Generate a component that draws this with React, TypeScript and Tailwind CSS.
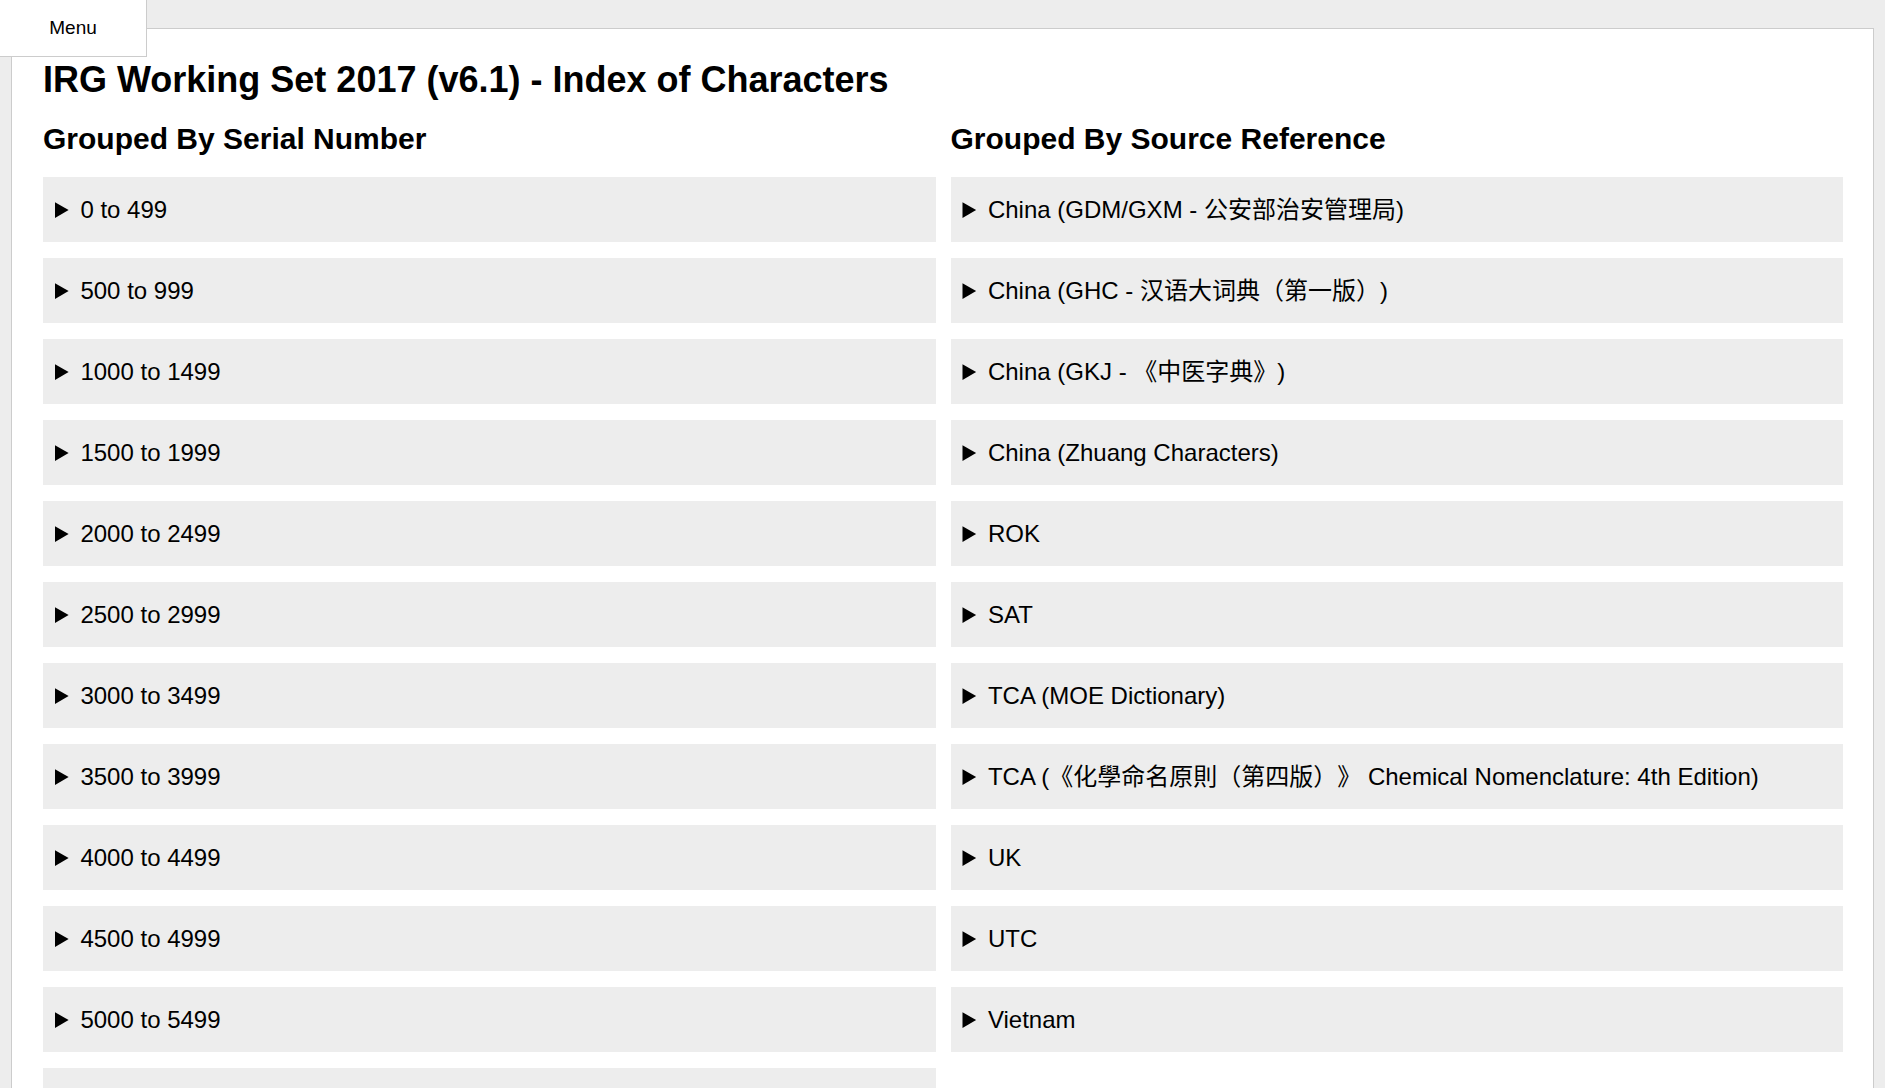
const serialGroups = [
  '0 to 499',
  '500 to 999',
  '1000 to 1499',
  '1500 to 1999',
  '2000 to 2499',
  '2500 to 2999',
  '3000 to 3499',
  '3500 to 3999',
  '4000 to 4499',
  '4500 to 4999',
  '5000 to 5499',
  '5500 to 5999',
];

const sourceGroups = [
  'China (GDM/GXM - 公安部治安管理局)',
  'China (GHC - 汉语大词典（第一版）)',
  'China (GKJ - 《中医字典》)',
  'China (Zhuang Characters)',
  'ROK',
  'SAT',
  'TCA (MOE Dictionary)',
  'TCA (《化學命名原則（第四版）》 Chemical Nomenclature: 4th Edition)',
  'UK',
  'UTC',
  'Vietnam',
];

function Group({ label }: { label: string }) {
  return (
    <details className="mb-[16px] bg-[#ededed]">
      <summary className="box-border h-[65px] cursor-pointer overflow-hidden pl-[12px] py-[19px] text-[24px] leading-[27px] text-black [text-spacing-trim:space-all]">
        {label}
      </summary>
    </details>
  );
}

function Column({ title, items }: { title: string; items: string[] }) {
  return (
    <div className="min-w-0">
      <h2 className="mt-[22px] mb-[21px] text-[30px] leading-[34px] font-bold text-black">{title}</h2>
      <div>
        {items.map((item, index) => (
          <Group key={index} label={item} />
        ))}
      </div>
    </div>
  );
}

export default function App() {
  return (
    <div className="min-h-screen bg-[#ededed] pt-[28px] font-['Liberation_Sans','Noto_Sans_CJK_SC',sans-serif]">
      {/* Floating menu tab */}
      <div className="fixed top-0 left-0 z-10 flex h-[57px] w-[147px] items-center justify-center border-r border-b border-[#cccccc] bg-white text-[19px] text-black">
        Menu
      </div>

      <div className="mx-[11px] min-h-[1100px] border border-[#cccccc] bg-white pt-[30px] pl-[31px] pr-[30px]">
        <h1 className="text-[36px] leading-[41px] font-bold text-black">
          IRG Working Set 2017 (v6.1) - Index of Characters
        </h1>
        <div className="grid grid-cols-2 gap-x-[15px]">
          <Column title="Grouped By Serial Number" items={serialGroups} />
          <Column title="Grouped By Source Reference" items={sourceGroups} />
        </div>
      </div>
    </div>
  );
}
